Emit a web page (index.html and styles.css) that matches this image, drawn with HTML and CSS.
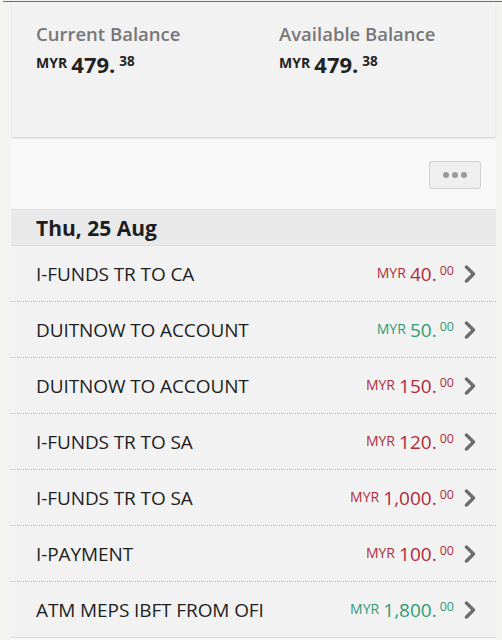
FILE: index.html
```html
<!DOCTYPE html>
<html>
<head>
<meta charset="utf-8">
<link rel="stylesheet" href="styles.css">
</head>
<body>
<div class="topline"></div>
<div class="page">
  <div class="card">
    <div class="bal">
      <div class="bal-label">Current Balance</div>
      <div class="bal-amt"><span class="cur">MYR</span> <span class="big">479.</span><span class="dec">38</span></div>
    </div>
    <div class="bal">
      <div class="bal-label">Available Balance</div>
      <div class="bal-amt"><span class="cur">MYR</span> <span class="big">479.</span><span class="dec">38</span></div>
    </div>
  </div>
  <div class="toolbar">
    <div class="more"><span class="dot"></span><span class="dot"></span><span class="dot"></span></div>
  </div>
  <div class="date">Thu, 25 Aug</div>
  <ul class="list">
    <li class="row"><span class="desc">I-FUNDS TR TO CA</span><span class="amt debit"><span class="cur">MYR</span> <span class="big">40.</span><span class="dec">00</span></span><svg class="chev" viewBox="0 0 12 18"><path d="M2.5 2 L9.5 9 L2.5 16"/></svg></li>
    <li class="row"><span class="desc">DUITNOW TO ACCOUNT</span><span class="amt credit"><span class="cur">MYR</span> <span class="big">50.</span><span class="dec">00</span></span><svg class="chev" viewBox="0 0 12 18"><path d="M2.5 2 L9.5 9 L2.5 16"/></svg></li>
    <li class="row"><span class="desc">DUITNOW TO ACCOUNT</span><span class="amt debit"><span class="cur">MYR</span> <span class="big">150.</span><span class="dec">00</span></span><svg class="chev" viewBox="0 0 12 18"><path d="M2.5 2 L9.5 9 L2.5 16"/></svg></li>
    <li class="row"><span class="desc">I-FUNDS TR TO SA</span><span class="amt debit"><span class="cur">MYR</span> <span class="big">120.</span><span class="dec">00</span></span><svg class="chev" viewBox="0 0 12 18"><path d="M2.5 2 L9.5 9 L2.5 16"/></svg></li>
    <li class="row"><span class="desc">I-FUNDS TR TO SA</span><span class="amt debit"><span class="cur">MYR</span> <span class="big">1,000.</span><span class="dec">00</span></span><svg class="chev" viewBox="0 0 12 18"><path d="M2.5 2 L9.5 9 L2.5 16"/></svg></li>
    <li class="row"><span class="desc">I-PAYMENT</span><span class="amt debit"><span class="cur">MYR</span> <span class="big">100.</span><span class="dec">00</span></span><svg class="chev" viewBox="0 0 12 18"><path d="M2.5 2 L9.5 9 L2.5 16"/></svg></li>
    <li class="row last"><span class="desc">ATM MEPS IBFT FROM OFI</span><span class="amt credit"><span class="cur">MYR</span> <span class="big">1,800.</span><span class="dec">00</span></span><svg class="chev" viewBox="0 0 12 18"><path d="M2.5 2 L9.5 9 L2.5 16"/></svg></li>
  </ul>
</div>
</body>
</html>
```

FILE: styles.css
```css
html, body {
  margin: 0;
  padding: 0;
}
body {
  background: #f3f3ef;
  font-family: "Open Sans", "Noto Sans", sans-serif;
  width: 502px;
  height: 640px;
  overflow: hidden;
  padding-top: 1px;
  box-sizing: border-box;
}
.topline {
  height: 1px;
  background: #6f6f6f;
  margin-left: 3px;
}
.page {
  margin-left: 11px;
  width: 485px;
  background: #f8f8f8;
  height: 640px;
}
.card {
  margin-left: 1px;
  width: 483px;
  height: 135px;
  background: #f2f2f2;
  box-shadow: 0 1px 2px rgba(0,0,0,0.18);
  display: flex;
  padding: 20px 0 0 24px;
  box-sizing: border-box;
}
.bal {
  width: 243px;
  flex-shrink: 0;
}
.bal-label {
  font-size: 18.5px;
  font-weight: 600;
  color: #777;
  line-height: 24px;
}
.bal-amt {
  color: #222;
  font-weight: 700;
  line-height: 26px;
  margin-top: 2px;
}
.bal-amt .cur {
  font-size: 14px;
  vertical-align: 5px;
}
.bal-amt .big {
  font-size: 22px;
}
.bal-amt .dec {
  font-size: 13.5px;
  vertical-align: 7px;
  margin-left: 4px;
}
.toolbar {
  height: 72px;
  display: flex;
  justify-content: flex-end;
  align-items: flex-start;
  padding: 24px 15px 0 0;
  box-sizing: border-box;
}
.more {
  width: 52px;
  height: 28px;
  box-sizing: border-box;
  border: 1px solid #cfcfcf;
  border-radius: 3px;
  background: #efefef;
  display: flex;
  align-items: center;
  justify-content: center;
  gap: 3px;
}
.dot {
  width: 6px;
  height: 6px;
  border-radius: 50%;
  background: #9a9a9a;
}
.date {
  height: 37px;
  background: #e9e9e9;
  border-top: 1px solid #dedede;
  border-bottom: 1px solid #dcdcdc;
  box-sizing: border-box;
  padding-left: 25px;
  font-size: 21px;
  font-weight: 700;
  color: #1e1e1e;
  line-height: 36px;
}
.list {
  list-style: none;
  margin: 0;
  padding: 0;
  background: #f2f2f2;
}
.row {
  height: 56px;
  box-sizing: border-box;
  display: flex;
  align-items: center;
  padding: 0 20px 0 25px;
  border-bottom: 1px dotted #b8b8b8;
}
.row.last {
  border-bottom: 1px solid #d6d6d6;
}
.desc {
  flex: 1;
  font-size: 19px;
  letter-spacing: -0.1px;
  color: #1e1e1e;
}
.amt {
  white-space: nowrap;
}
.amt .cur {
  font-size: 14px;
  vertical-align: 3px;
}
.amt .big {
  font-size: 19px;
}
.amt .dec {
  font-size: 12.5px;
  vertical-align: 6px;
  margin-left: 3px;
}
.debit { color: #b02a3a; }
.credit { color: #2f9a74; }
.chev {
  width: 12px;
  height: 18px;
  margin-left: 10px;
  fill: none;
  stroke: #6e6e6e;
  stroke-width: 3.4;
  stroke-linecap: round;
  stroke-linejoin: round;
}
```
